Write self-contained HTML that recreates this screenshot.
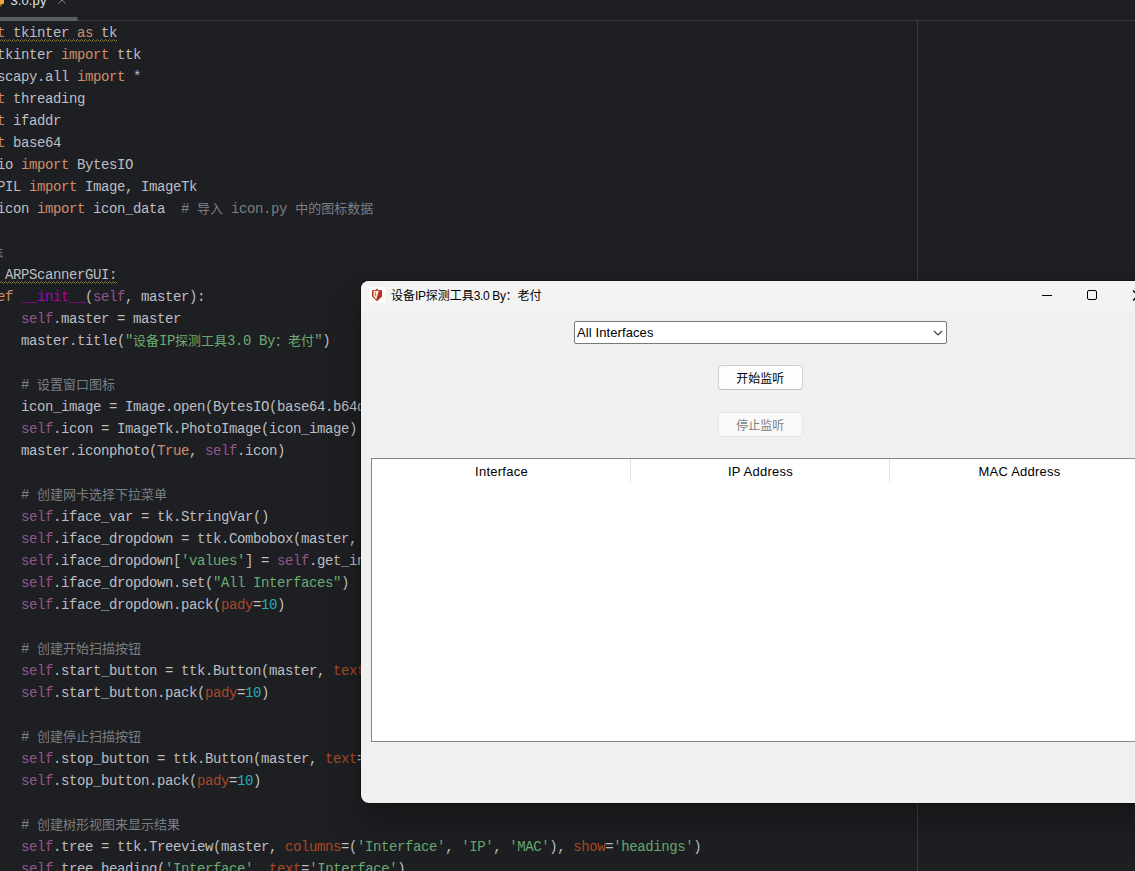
<!DOCTYPE html>
<html lang="zh-CN">
<head>
<meta charset="utf-8">
<title>设备IP探测工具3.0</title>
<style>
html,body{margin:0;padding:0;}
body{width:1135px;height:871px;overflow:hidden;background:#1e1f22;position:relative;}
#ide{position:absolute;left:0;top:0;width:1135px;height:871px;overflow:hidden;background:#1e1f22;}
#tabbar{position:absolute;left:0;top:0;width:1135px;height:20px;overflow:hidden;}
#pyicon{position:absolute;left:0;top:0;}
#tabname{position:absolute;left:10.5px;top:-9px;font:13px/20px "Liberation Sans","Noto Sans CJK SC",sans-serif;color:#dfe1e5;white-space:nowrap;letter-spacing:0.1px;}
#tabx{position:absolute;left:57px;top:-3px;}
#tabline{position:absolute;left:0;top:20px;width:1135px;height:1px;background:#393b40;}
#tabsel{position:absolute;left:-10px;top:17px;width:88px;height:4px;border-radius:2px;background:#5a5d63;}
#margin{position:absolute;left:917px;top:21px;width:1px;height:850px;background:#393b40;}
#code{position:absolute;left:-43px;top:22px;letter-spacing:-0.4px;color:#bcbec4;font-family:"Liberation Mono","Noto Sans CJK SC",monospace;font-size:14px;line-height:22px;}
.ln{height:22px;white-space:pre;}
.k{color:#cf8e6d}
.s{color:#6aab73}
.c{color:#7a7e85}
.f{color:#94558d}
.d{color:#b200b2}
.n{color:#2aacb8}
.a{color:#aa4926}
i.z{font-style:normal;line-height:0;letter-spacing:0;position:relative;top:-0.5px;font-family:"Noto Sans CJK SC",sans-serif;font-size:13px;}
.hint{font-family:"Liberation Sans","Noto Sans CJK SC",sans-serif;font-size:11px;color:#7a7e85;}
.hint .h{position:relative;left:6px;top:0px;}
.wave{position:absolute;display:block;}

/* ---------- tk window ---------- */
#win{position:absolute;left:361px;top:281px;width:800px;height:522px;background:#f0f0f0;border-radius:8px;
  box-shadow:0 0 0 1px rgba(0,0,0,.30),0 23px 35px rgba(0,0,0,.27),0 0 10px rgba(0,0,0,.12);
  font-family:"Liberation Sans","Noto Sans CJK SC",sans-serif;font-size:12px;color:#000;}
#titlebar{position:absolute;left:0;top:0;width:800px;height:30px;background:#f3f3f3;border-radius:8px 8px 0 0;}
#appicon{position:absolute;left:8px;top:6px;width:16px;height:16px;}
#title{position:absolute;left:30px;top:7px;line-height:16px;font-size:12px;white-space:nowrap;color:#000;}
.cap{position:absolute;top:0;width:46px;height:30px;}
#combo{position:absolute;left:213px;top:40px;width:371px;height:21px;border:1px solid #7a7a7a;border-radius:2px;background:#fff;}
#combo span{position:absolute;left:2px;top:3px;line-height:16px;white-space:nowrap;font-size:13px;letter-spacing:0.1px;}
#combo svg{position:absolute;right:3px;top:8px;}
.btn{position:absolute;left:357px;width:83px;height:23px;border:1px solid #d0d0d0;border-bottom-color:#bcbcbc;border-radius:4px;background:#fdfdfd;text-align:center;line-height:26px;font-size:12px;text-indent:-0.5px;}
#b1{top:84px;}
#b2{top:131px;background:#f9f9f9;border-color:#e6e6e6;color:#7e7e7e;}
#tree{position:absolute;left:10px;top:177px;width:778px;height:282px;border:1px solid #828790;background:#fff;}
.th{position:absolute;top:0;height:24px;width:259px;line-height:26px;text-align:center;font-size:13px;letter-spacing:0.25px;}
.th+.th{box-shadow:-1px 0 0 #e5e5e5;}
#title b{font-weight:normal;font-size:12px;letter-spacing:-0.35px;}

</style>
</head>
<body>
<div id="ide">
  <div id="tabbar">
    <svg id="pyicon" width="8" height="10" viewBox="0 0 8 10"><path d="M-4 -2 H1.6 Q4 -2 4 0.4 V2.2 Q4 4.4 1.6 4.4 H-4 Z" fill="#f2a93b"/><path d="M-2 4.4 H1.4 V5.4 Q1.4 6.4 0 6.4 H-2 Z" fill="#9a8a3a"/></svg>
    <span id="tabname">3.0.py</span>
    <svg id="tabx" width="10" height="10" viewBox="0 0 10 10"><path d="M1.5 6.5 L5 3 L8.5 6.5" fill="none" stroke="#868a91" stroke-width="1"/></svg>
  </div>
  <div id="tabline"></div>
  <div id="tabsel"></div>
  <div id="margin"></div>
  <div id="code">
<div class="ln"><span class="k">import</span> tkinter <span class="k">as</span> tk</div>
<div class="ln"><span class="k">from</span> tkinter <span class="k">import</span> ttk</div>
<div class="ln"><span class="k">from</span> scapy.all <span class="k">import</span> *</div>
<div class="ln"><span class="k">import</span> threading</div>
<div class="ln"><span class="k">import</span> ifaddr</div>
<div class="ln"><span class="k">import</span> base64</div>
<div class="ln"><span class="k">from</span> io <span class="k">import</span> BytesIO</div>
<div class="ln"><span class="k">from</span> PIL <span class="k">import</span> Image, ImageTk</div>
<div class="ln"><span class="k">from</span> icon <span class="k">import</span> icon_data  <span class="c"># <i class="z">导入</i> icon.py <i class="z">中的图标数据</i></span></div>
<div class="ln"></div>
<div class="ln hint"><span class="h">1 个用法</span></div>
<div class="ln"><span class="k">class</span> ARPScannerGUI:</div>
<div class="ln">    <span class="k">def</span> <span class="d">__init__</span>(<span class="f">self</span>, master):</div>
<div class="ln">        <span class="f">self</span>.master = master</div>
<div class="ln">        master.title(<span class="s">"<i class="z">设备</i>IP<i class="z">探测工具</i>3.0 By<i class="z">：老付</i>"</span>)</div>
<div class="ln"></div>
<div class="ln">        <span class="c"># <i class="z">设置窗口图标</i></span></div>
<div class="ln">        icon_image = Image.open(BytesIO(base64.b64decode(icon_data)))</div>
<div class="ln">        <span class="f">self</span>.icon = ImageTk.PhotoImage(icon_image)</div>
<div class="ln">        master.iconphoto(<span class="k">True</span>, <span class="f">self</span>.icon)</div>
<div class="ln"></div>
<div class="ln">        <span class="c"># <i class="z">创建网卡选择下拉菜单</i></span></div>
<div class="ln">        <span class="f">self</span>.iface_var = tk.StringVar()</div>
<div class="ln">        <span class="f">self</span>.iface_dropdown = ttk.Combobox(master, <span class="a">textvariable</span>=<span class="f">self</span>.iface_var)</div>
<div class="ln">        <span class="f">self</span>.iface_dropdown[<span class="s">'values'</span>] = <span class="f">self</span>.get_interfaces()</div>
<div class="ln">        <span class="f">self</span>.iface_dropdown.set(<span class="s">"All Interfaces"</span>)</div>
<div class="ln">        <span class="f">self</span>.iface_dropdown.pack(<span class="a">pady</span>=<span class="n">10</span>)</div>
<div class="ln"></div>
<div class="ln">        <span class="c"># <i class="z">创建开始扫描按钮</i></span></div>
<div class="ln">        <span class="f">self</span>.start_button = ttk.Button(master, <span class="a">text</span>=<span class="s">"<i class="z">开始监听</i>"</span>)</div>
<div class="ln">        <span class="f">self</span>.start_button.pack(<span class="a">pady</span>=<span class="n">10</span>)</div>
<div class="ln"></div>
<div class="ln">        <span class="c"># <i class="z">创建停止扫描按钮</i></span></div>
<div class="ln">        <span class="f">self</span>.stop_button = ttk.Button(master, <span class="a">text</span>=<span class="s">"<i class="z">停止监听</i>"</span>)</div>
<div class="ln">        <span class="f">self</span>.stop_button.pack(<span class="a">pady</span>=<span class="n">10</span>)</div>
<div class="ln"></div>
<div class="ln">        <span class="c"># <i class="z">创建树形视图来显示结果</i></span></div>
<div class="ln">        <span class="f">self</span>.tree = ttk.Treeview(master, <span class="a">columns</span>=(<span class="s">'Interface'</span>, <span class="s">'IP'</span>, <span class="s">'MAC'</span>), <span class="a">show</span>=<span class="s">'headings'</span>)</div>
<div class="ln">        <span class="f">self</span>.tree.heading(<span class="s">'Interface'</span>, <span class="a">text</span>=<span class="s">'Interface'</span>)</div>
<div class="ln">        <span class="f">self</span>.tree.heading(<span class="s">'IP'</span>, <span class="a">text</span>=<span class="s">'IP Address'</span>)</div>
  </div>
  <svg class="wave" style="left:-3px;top:39px" width="120" height="3" viewBox="-3 0 120 3"><polyline points="-2.5,0.5 -0.5,2.5 1.5,0.5 3.5,2.5 5.5,0.5 7.5,2.5 9.5,0.5 11.5,2.5 13.5,0.5 15.5,2.5 17.5,0.5 19.5,2.5 21.5,0.5 23.5,2.5 25.5,0.5 27.5,2.5 29.5,0.5 31.5,2.5 33.5,0.5 35.5,2.5 37.5,0.5 39.5,2.5 41.5,0.5 43.5,2.5 45.5,0.5 47.5,2.5 49.5,0.5 51.5,2.5 53.5,0.5 55.5,2.5 57.5,0.5 59.5,2.5 61.5,0.5 63.5,2.5 65.5,0.5 67.5,2.5 69.5,0.5 71.5,2.5 73.5,0.5 75.5,2.5 77.5,0.5 79.5,2.5 81.5,0.5 83.5,2.5 85.5,0.5 87.5,2.5 89.5,0.5 91.5,2.5 93.5,0.5 95.5,2.5 97.5,0.5 99.5,2.5 101.5,0.5 103.5,2.5 105.5,0.5 107.5,2.5 109.5,0.5 111.5,2.5 113.5,0.5 115.5,2.5 117.5,0.5" fill="none" stroke="#8c7b3a" stroke-width="1" stroke-linejoin="miter"/></svg><svg class="wave" style="left:-3px;top:281px" width="120" height="3" viewBox="-3 0 120 3"><polyline points="-2.5,0.5 -0.5,2.5 1.5,0.5 3.5,2.5 5.5,0.5 7.5,2.5 9.5,0.5 11.5,2.5 13.5,0.5 15.5,2.5 17.5,0.5 19.5,2.5 21.5,0.5 23.5,2.5 25.5,0.5 27.5,2.5 29.5,0.5 31.5,2.5 33.5,0.5 35.5,2.5 37.5,0.5 39.5,2.5 41.5,0.5 43.5,2.5 45.5,0.5 47.5,2.5 49.5,0.5 51.5,2.5 53.5,0.5 55.5,2.5 57.5,0.5 59.5,2.5 61.5,0.5 63.5,2.5 65.5,0.5 67.5,2.5 69.5,0.5 71.5,2.5 73.5,0.5 75.5,2.5 77.5,0.5 79.5,2.5 81.5,0.5 83.5,2.5 85.5,0.5 87.5,2.5 89.5,0.5 91.5,2.5 93.5,0.5 95.5,2.5 97.5,0.5 99.5,2.5 101.5,0.5 103.5,2.5 105.5,0.5 107.5,2.5 109.5,0.5 111.5,2.5 113.5,0.5 115.5,2.5 117.5,0.5" fill="none" stroke="#8c7b3a" stroke-width="1" stroke-linejoin="miter"/></svg>
</div>
<div id="win">
  <div id="titlebar">
    <svg id="appicon" viewBox="0 0 16 16">
      <rect width="16" height="16" fill="#fff"/>
      <path d="M3 3.2 L6.6 2.9 L8 1.6 L9.6 2.9 L13 3.2 V9.4 L8 14.2 L3 9.4 Z" fill="#b6321a"/>
      <path d="M4.5 4 L9.8 3.7 L9 6.6 L8.2 9.2 L7.3 12.4 L4.5 9.3 Z" fill="#fff4ee"/>
      <path d="M5.6 5.4 L7.6 4.8 L6.6 7.2 L7.6 7.6 L6.2 10 L5.8 8 Z" fill="#e07a2a"/>
      <path d="M7.2 12.6 L8 14.2 L9 13 Z" fill="#e2691f"/>
    </svg>
    <span id="title">设备<b>IP</b>探测工具<b>3.0 By</b>：老付</span>
    <svg class="cap" style="left:662px" viewBox="0 0 46 30"><path d="M19 14.5 H29" stroke="#000" stroke-width="1" fill="none"/></svg>
    <svg class="cap" style="left:708px" viewBox="0 0 46 30"><rect x="18.5" y="9.5" width="9" height="9" rx="1.5" fill="none" stroke="#000" stroke-width="1"/></svg>
    <svg class="cap" style="left:754px" viewBox="0 0 46 30"><path d="M18 9.5 L28 19.5 M28 9.5 L18 19.5" stroke="#000" stroke-width="1.3" fill="none"/></svg>
  </div>
  <div id="combo"><span>All Interfaces</span>
    <svg width="10" height="7" viewBox="0 0 10 7"><path d="M1 1 L5 5 L9 1" fill="none" stroke="#3c3c3c" stroke-width="1.1"/></svg>
  </div>
  <div class="btn" id="b1">开始监听</div>
  <div class="btn" id="b2">停止监听</div>
  <div id="tree">
    <div class="th" style="left:0">Interface</div>
    <div class="th" style="left:259px">IP Address</div>
    <div class="th" style="left:518px">MAC Address</div>
  </div>
</div>

</body>
</html>
